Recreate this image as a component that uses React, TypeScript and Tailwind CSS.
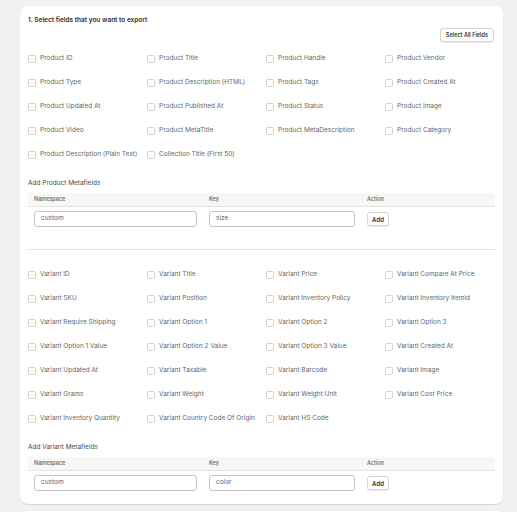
const productFields = [
  'Product ID',
  'Product Title',
  'Product Handle',
  'Product Vendor',
  'Product Type',
  'Product Description (HTML)',
  'Product Tags',
  'Product Created At',
  'Product Updated At',
  'Product Published At',
  'Product Status',
  'Product Image',
  'Product Video',
  'Product MetaTitle',
  'Product MetaDescription',
  'Product Category',
  'Product Description (Plain Text)',
  'Collection Title (First 50)',
]

const variantFields = [
  'Variant ID',
  'Variant Title',
  'Variant Price',
  'Variant Compare At Price',
  'Variant SKU',
  'Variant Position',
  'Variant Inventory Policy',
  'Variant Inventory Itemid',
  'Variant Require Shipping',
  'Variant Option 1',
  'Variant Option 2',
  'Variant Option 3',
  'Variant Option 1 Value',
  'Variant Option 2 Value',
  'Variant Option 3 Value',
  'Variant Created At',
  'Variant Updated At',
  'Variant Taxable',
  'Variant Barcode',
  'Variant Image',
  'Variant Grams',
  'Variant Weight',
  'Variant Weight Unit',
  'Variant Cost Price',
  'Variant Inventory Quantity',
  'Variant Country Code Of Origin',
  'Variant HS Code',
]

function FieldGrid({ fields }: { fields: string[] }) {
  return (
    <div className="grid grid-cols-4 gap-x-[9px]">
      {fields.map((f) => (
        <label key={f} className="flex h-[24px] items-center gap-[4px] text-[6.5px] text-[#666666] whitespace-nowrap">
          <span className="h-[8px] w-[8px] shrink-0 rounded-[1.5px] border border-[#d0d0d0] bg-white" />
          {f}
        </label>
      ))}
    </div>
  )
}

function Metafields({ title, keyValue }: { title: string; keyValue: string }) {
  return (
    <div>
      <div className="mt-[11px] text-[6.5px] leading-[10px] text-[#4a4a4a]">{title}</div>
      <div className="mt-[5px] flex h-[14px] items-center border-b border-[#e3e3e3] bg-[#f7f7f7] text-[5.5px] font-medium text-[#616161]">
        <div className="w-[175px] px-[6px]">Namespace</div>
        <div className="w-[158px] px-[6px]">Key</div>
        <div className="flex-1 px-[6px]">Action</div>
      </div>
      <div className="flex items-center pt-[4px]">
        <div className="w-[175px] px-[6px]">
          <div className="flex h-[16px] items-center rounded-[3px] border border-[#c4c4c4] px-[6px] text-[6.5px] text-[#5a6070]">custom</div>
        </div>
        <div className="w-[158px] px-[6px]">
          <div className="flex h-[16px] items-center rounded-[3px] border border-[#c4c4c4] px-[6px] text-[6.5px] text-[#5a6070]">{keyValue}</div>
        </div>
        <div className="flex-1 px-[6px]">
          <div className="flex h-[14px] w-[22px] items-center justify-center rounded-[3px] border border-[#d4d4d4] bg-white text-[6px] font-semibold text-[#303030] shadow-[0_1px_0_rgba(0,0,0,0.08)]">Add</div>
        </div>
      </div>
    </div>
  )
}

export default function App() {
  return (
    <div className="h-[512px] overflow-hidden bg-[#f1f1f1] pl-[20px] pr-[14px] pt-[6px] font-['Inter',sans-serif] [-webkit-font-smoothing:antialiased]">
      <div className="rounded-[8px] bg-white px-[8px] pt-[9px] pb-[13px] shadow-[0_1px_1px_rgba(0,0,0,0.12)]">
        <div className="text-[6.5px] font-semibold leading-[10px] text-[#303030]">1. Select fields that you want to export</div>
        <div className="mt-[3px] flex justify-end pr-[1px]">
          <button className="h-[14px] rounded-[3px] border border-[#d4d4d4] bg-white px-[5px] text-[5.5px] font-semibold text-[#303030] shadow-[0_1px_0_rgba(0,0,0,0.08)]">
            Select All Fields
          </button>
        </div>
        <div className="mt-[5px]">
          <FieldGrid fields={productFields} />
        </div>
        <Metafields title="Add Product Metafields" keyValue="size" />
        <div className="mt-[22px] border-t border-[#e3e3e3]" />
        <div className="mt-[13px]">
          <FieldGrid fields={variantFields} />
        </div>
        <Metafields title="Add Variant Metafields" keyValue="color" />
      </div>
      <div className="mt-[7px] h-[20px] rounded-t-[8px] bg-white shadow-[0_1px_1px_rgba(0,0,0,0.12)]" />
    </div>
  )
}
